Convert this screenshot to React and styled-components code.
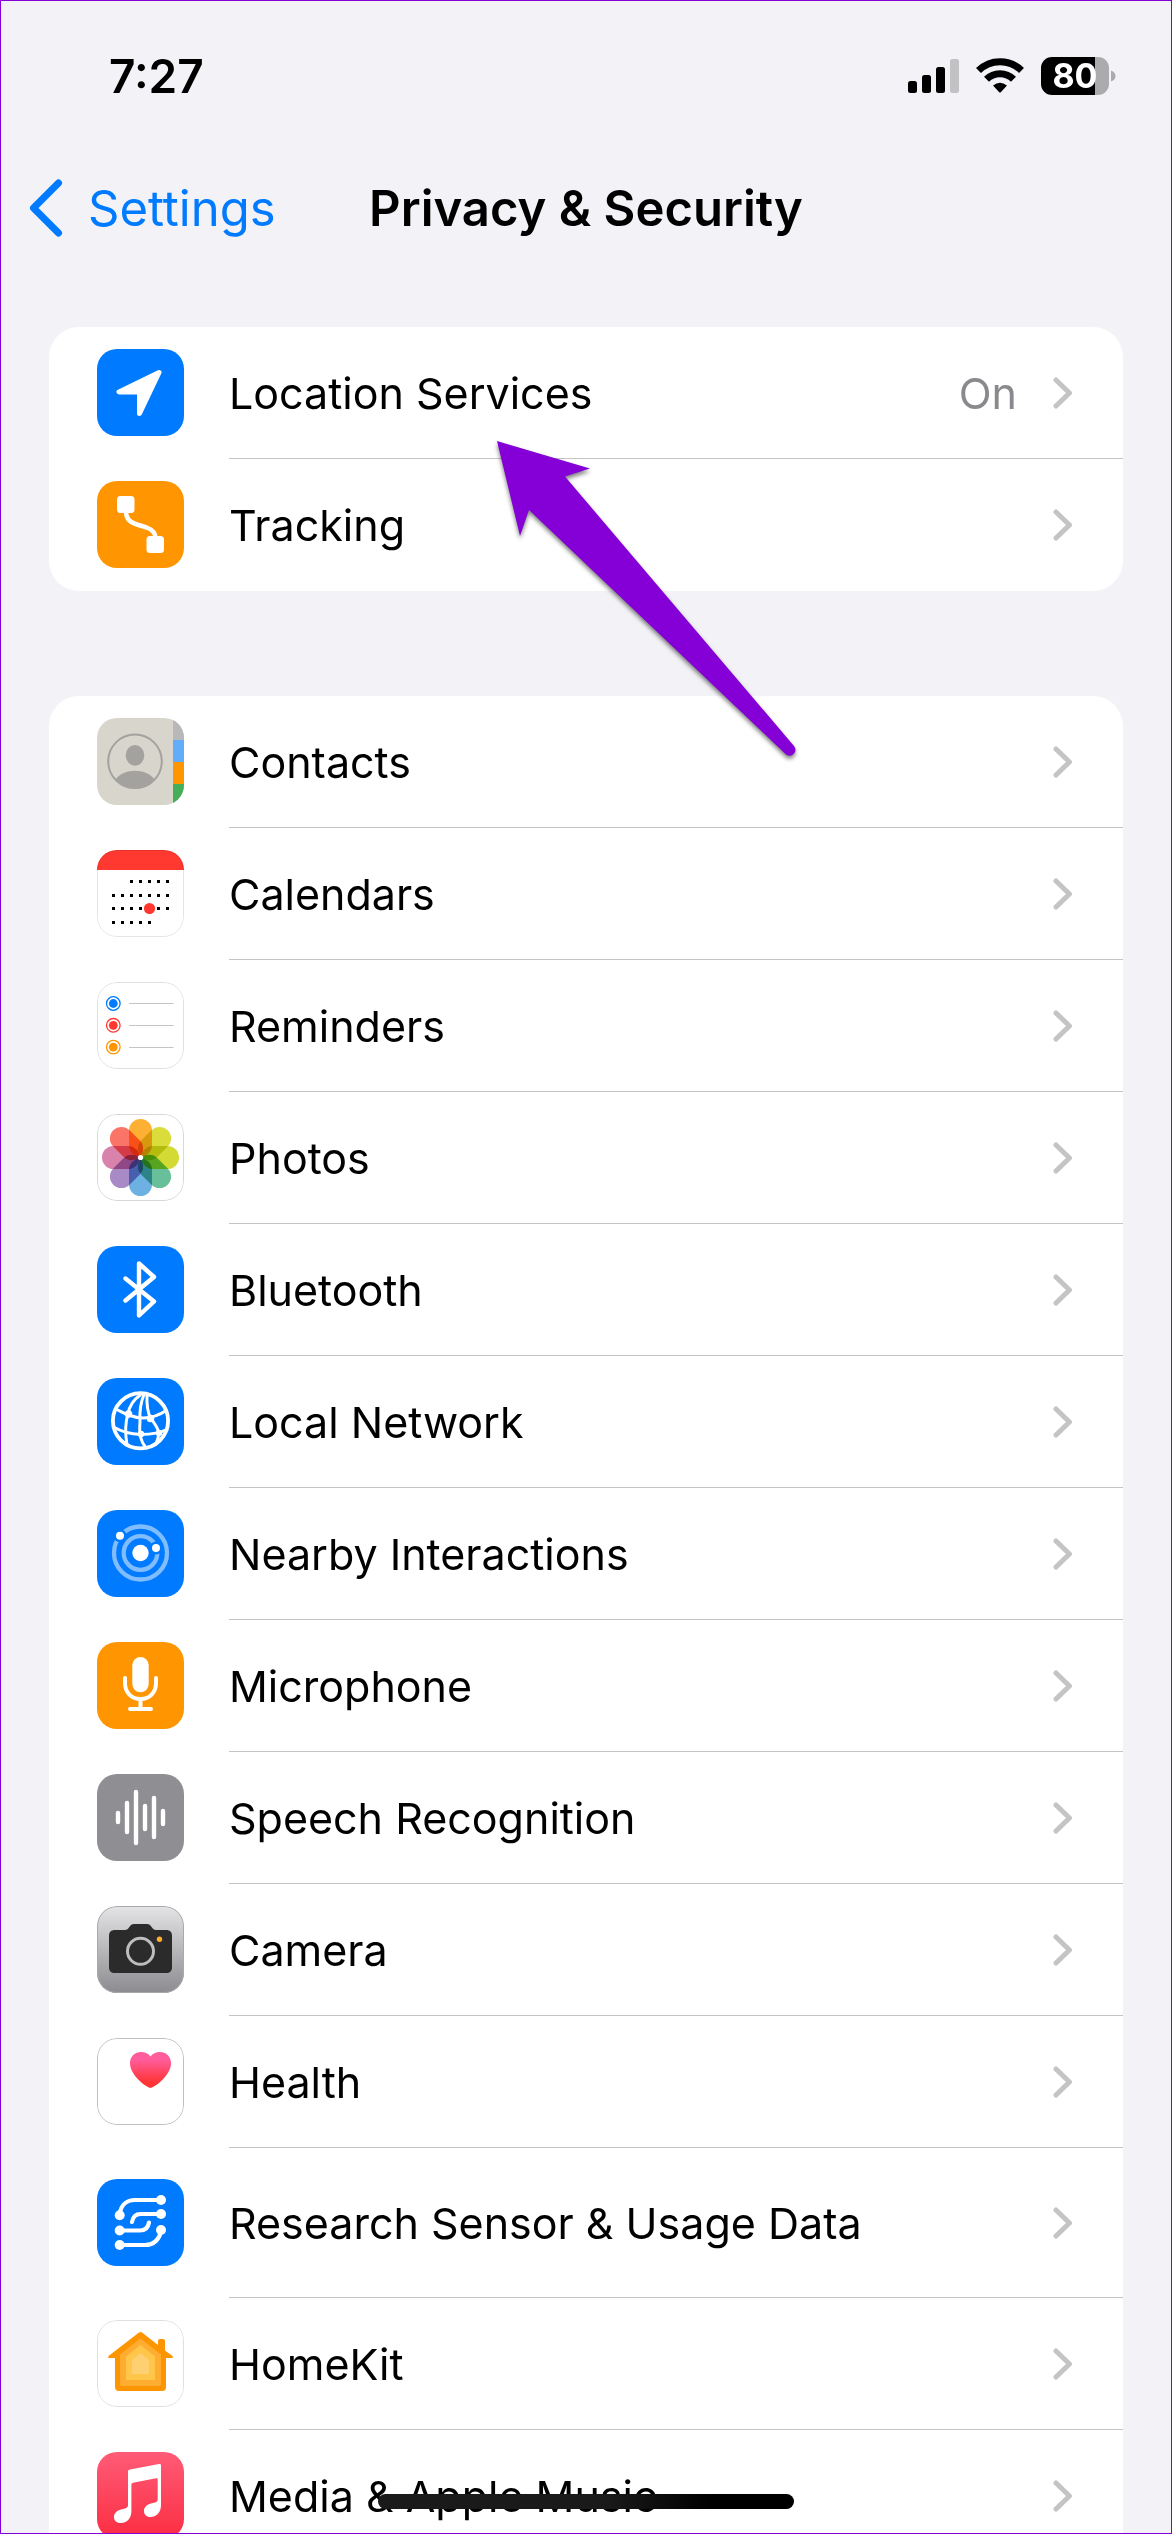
import React from "react";
import styled, { createGlobalStyle } from "styled-components";

const petals = [
  "#fdb034",
  "#dadc3c",
  "#d4da34",
  "#68c09a",
  "#6db0e2",
  "#a88ac6",
  "#d982ac",
  "#fa7468",
];

const calendarDots = [
  { y: 30, from: 2, to: 6 },
  { y: 44, from: 0, to: 6 },
  { y: 57, from: 0, to: 6 },
  { y: 71, from: 0, to: 4 },
];

const icons = {
  location: (
    <path
      d="M62 23.5L22 43H42.5V64.5Z"
      fill="#fff"
      stroke="#fff"
      strokeWidth="5"
      strokeLinejoin="round"
    />
  ),
  tracking: (
    <>
      <rect x="20" y="15" width="17.5" height="17" rx="3.5" fill="#fff" />
      <rect x="49.5" y="55" width="17.5" height="17" rx="3.5" fill="#fff" />
      <path
        d="M29 31C29 37 32.5 41 38.5 43L49.5 46.5C55 48.5 58.5 51 58.5 57"
        fill="none"
        stroke="#fff"
        strokeWidth="4.5"
      />
    </>
  ),
  contacts: (
    <>
      <rect x="76" width="11" height="22" fill="#b8b8b8" />
      <rect x="76" y="22" width="11" height="22" fill="#62adfa" />
      <rect x="76" y="44" width="11" height="22" fill="#ff9500" />
      <rect x="76" y="66" width="11" height="21" fill="#45ae59" />
      <circle cx="38" cy="43.3" r="26.8" fill="none" stroke="#a3a29f" strokeWidth="2" />
      <ellipse cx="38" cy="37.3" rx="9.3" ry="10.4" fill="#a3a29f" />
      <path d="M18.5 61.5C26 49.8 50 49.8 57.5 61.5A27 27 0 0 1 18.5 61.5Z" fill="#a3a29f" />
    </>
  ),
  calendars: (
    <>
      <rect width="87" height="20" fill="#ff3830" />
      {calendarDots.map((row) =>
        Array.from({ length: row.to - row.from + 1 }, (_, i) => (
          <rect
            key={`${row.y}-${i}`}
            x={15 + (row.from + i) * 9}
            y={row.y}
            width="3"
            height="3"
          />
        ))
      )}
      <circle cx="52.5" cy="58.5" r="5.6" fill="#ff3830" />
    </>
  ),
  reminders: (
    <>
      {["#007aff", "#ff3830", "#ff9500"].map((color, i) => (
        <g key={color}>
          <circle cx="16.3" cy={21.5 + i * 21.8} r="6.8" fill="none" stroke={color} strokeWidth="1.3" />
          <circle cx="16.3" cy={21.5 + i * 21.8} r="4.4" fill={color} />
          <rect x="32" y={21 + i * 22} width="44.5" height="1" fill="#c4c4c6" />
        </g>
      ))}
    </>
  ),
  photos: (
    <g style={{ isolation: "isolate" }}>
      {petals.map((color, i) => (
        <rect
          key={color}
          x="32"
          y="5"
          width="23"
          height="37.5"
          rx="11.5"
          fill={color}
          transform={`rotate(${i * 45} 43.5 43.5)`}
          style={{ mixBlendMode: "multiply" }}
        />
      ))}
      <circle cx="43.5" cy="43.5" r="2.6" fill="#fff" />
    </g>
  ),
  bluetooth: (
    <path
      d="M28.5 32.5L57 55.5L42 69.5V17.5L57 31L28.5 54.5"
      fill="none"
      stroke="#fff"
      strokeWidth="4.4"
      strokeLinecap="round"
      strokeLinejoin="round"
    />
  ),
  network: (
    <g fill="none" stroke="#fff" strokeWidth="3">
      <circle cx="43.5" cy="42.8" r="27.6" strokeWidth="3.8" />
      <path d="M44 16.5C36 22 32 29 31 36C28 45 28 55 30 67" />
      <path d="M47 16.5C43 26 42.5 36 43 44C42 56 43 62 49 70" />
      <path d="M50 16.5C49.5 29 50.5 34 53.5 40C61 50 65 55 58 67" />
      <path d="M19 31C26 34.5 28 36 33 37.5C44 41.5 56 41.5 70 32" />
      <path d="M16.5 49C24 53.5 34 56 44 56.5C55 56.5 64 54.5 71 51" />
      <g fill="#fff" stroke="none">
        <circle cx="31.5" cy="36" r="3.8" />
        <circle cx="53.5" cy="40.5" r="3.8" />
        <circle cx="44" cy="56" r="3.2" />
        <circle cx="62" cy="55" r="3.2" />
      </g>
    </g>
  ),
  nearby: (
    <>
      <g fill="none" stroke="#80bdff" strokeWidth="4.3">
        <circle cx="43.5" cy="43" r="16.8" />
        <circle cx="43.5" cy="43" r="26.5" />
      </g>
      <g fill="#007aff">
        <circle cx="23" cy="25.7" r="6.5" />
        <circle cx="59" cy="38" r="6.5" />
      </g>
      <g fill="#fff">
        <circle cx="43.5" cy="43" r="8.2" />
        <circle cx="23" cy="25.7" r="4" />
        <circle cx="59" cy="38" r="4" />
      </g>
    </>
  ),
  microphone: (
    <>
      <rect x="35.3" y="15" width="16.4" height="35.3" rx="8.2" fill="#fff" />
      <path
        d="M28 36V41C28 50.5 34.5 57 43.5 57S59 50.5 59 41V36M43.5 57V67M33 67H54"
        fill="none"
        stroke="#fff"
        strokeWidth="4"
        strokeLinecap="round"
      />
    </>
  ),
  speech: (
    <path
      d="M21 39V48M30 29V58M39 18V69M48 32V55M57 24V63M66 37V50"
      stroke="#fff"
      strokeWidth="4.4"
      strokeLinecap="round"
    />
  ),
  camera: (
    <>
      <path
        d="M18 24H28C30 24 31 23 32 21.5C33.5 19 35 18 37 18H50C52 18 53.5 19 55 21.5C56 23 57 24 59 24H69C73 24 75 26 75 30V61C75 65 73 67 69 67H18C14 67 12 65 12 61V30C12 26 14 24 18 24Z"
        fill="#2b2b2c"
      />
      <circle cx="43.5" cy="45.3" r="13" fill="none" stroke="#bdbdbf" strokeWidth="3" />
      <circle cx="62.5" cy="33.3" r="2.7" fill="#ffae2b" />
    </>
  ),
  health: (
    <>
      <linearGradient id="heart" x1="0" y1="0" x2="0" y2="1">
        <stop offset="0.2" stopColor="#ff5c9c" />
        <stop offset="0.85" stopColor="#ff3434" />
      </linearGradient>
      <path
        d="M53.5 50C51 50 33 38.5 33 25C33 18.5 38 14 44 14C48 14 51.5 15.5 53.5 18.5C55.5 15.5 59 14 63 14C69 14 74 18.5 74 25C74 38.5 56 50 53.5 50Z"
        fill="url(#heart)"
      />
    </>
  ),
  research: (
    <>
      <path
        d="M22.7 35C24 26 30 21 38 21H64M35 43C36 37 39 35 43.5 35H64M22.7 51.5H43C48 51.5 51 49 52 43.5M22.7 66H48C57 66 63 60 64 51"
        fill="none"
        stroke="#fff"
        strokeWidth="4.2"
        strokeLinecap="round"
      />
      <g fill="#fff">
        <circle cx="64" cy="21" r="5" />
        <circle cx="64" cy="35" r="5" />
        <circle cx="64" cy="51" r="5" />
        <circle cx="22.7" cy="36.3" r="5" />
        <circle cx="22.7" cy="51.5" r="5" />
        <circle cx="22.7" cy="66" r="5" />
      </g>
    </>
  ),
  homekit: (
    <>
      <path
        d="M42 12.5Q43.5 11.5 45 12.5L61 25V21Q61 19 63 19H66Q68 19 68 21V30.5L75.5 36Q76.5 38 74.5 38H69V67Q69 71 65 71H22Q18 71 18 67V38H12.5Q10.5 38 11.5 36Z"
        fill="#fd9500"
      />
      <path d="M43.5 18.5L64 34.5V64Q64 66 62 66H25Q23 66 23 64V34.5Z" fill="#ffad31" />
      <path d="M43.5 25L58 36.5V60H29V36.5Z" fill="#ffc64a" />
      <path d="M43.5 33L52 40V54H35V40Z" fill="#ffd072" />
    </>
  ),
  music: (
    <path
      d="M64 13.5V53C64 61 59 65 53.5 65C50 65 47 63 47 59C47 55 50 52.5 54 51.5L58 50.5C60 50 60.7 49 60.7 47V27.5C60.7 26.5 60 26 59 26.2L36 30.7C35 31 34.4 31.5 34.4 32.5V59C34.4 67 29.5 71 24 71C20 71 17 69 17 65C17 61 20 58.5 24 57.5L28 56.5C30 56 31 55 31 53V20C31 18.5 31.5 17.8 33 17.5L62 12C63.3 11.8 64 12.3 64 13.5Z"
      fill="#fff"
    />
  ),
};

const accessRows = [
  { label: "Location Services", icon: "location", bg: "#007aff", value: "On" },
  { label: "Tracking", icon: "tracking", bg: "#ff9500" },
];

const appRows = [
  { label: "Contacts", icon: "contacts", bg: "#d8d5cc" },
  { label: "Calendars", icon: "calendars", bg: "#fff", edge: "rgba(0, 0, 0, 0.1)" },
  { label: "Reminders", icon: "reminders", bg: "#fff", edge: "#e0e0e2" },
  { label: "Photos", icon: "photos", bg: "#fff", edge: "#d8d8da" },
  { label: "Bluetooth", icon: "bluetooth", bg: "#007aff" },
  { label: "Local Network", icon: "network", bg: "#007aff" },
  { label: "Nearby Interactions", icon: "nearby", bg: "#007aff" },
  { label: "Microphone", icon: "microphone", bg: "#ff9500" },
  { label: "Speech Recognition", icon: "speech", bg: "#8e8e93" },
  {
    label: "Camera",
    icon: "camera",
    bg: "linear-gradient(#e4e4e6, #8c8c90)",
    edge: "#a9a9ab",
  },
  { label: "Health", icon: "health", bg: "#fff", edge: "#c0c0c2" },
  { label: "Research Sensor & Usage Data", icon: "research", bg: "#007aff", tall: true },
  { label: "HomeKit", icon: "homekit", bg: "#fff", edge: "#e0e0e2" },
  { label: "Media & Apple Music", icon: "music", bg: "linear-gradient(#ff5b77, #fb2d42)" },
];

function SettingsGroup({ rows }) {
  return (
    <Group>
      {rows.map((row) => (
        <li key={row.label}>
          <Row href="#" $tall={row.tall}>
            <IconTile $bg={row.bg} $edge={row.edge}>
              <svg viewBox="0 0 87 87" aria-hidden="true">
                {icons[row.icon]}
              </svg>
            </IconTile>
            <RowBody>
              <Label>{row.label}</Label>
              {row.value && <Value>{row.value}</Value>}
              <Chevron viewBox="0 0 20 32" aria-hidden="true">
                <path d="M3 3L16.5 16L3 29" />
              </Chevron>
            </RowBody>
          </Row>
        </li>
      ))}
    </Group>
  );
}

export default function App() {
  return (
    <Screen>
      <GlobalStyle />
      <StatusBar>
        <Time>7:27</Time>
        <StatusIcons>
          <svg width="51" height="38" viewBox="0 0 51 38" aria-hidden="true">
            <rect y="24" width="9" height="12" rx="2.5" />
            <rect x="14" y="18" width="9" height="18" rx="2.5" />
            <rect x="28" y="10" width="9" height="26" rx="2.5" />
            <rect x="42" y="2" width="9" height="34" rx="2.5" fill="#c2c2c4" />
          </svg>
          <svg width="48" height="38" viewBox="0 0 48 38" aria-hidden="true">
            <g fill="none" stroke="#000" strokeWidth="7">
              <path d="M2.5 13.5A30.5 30.5 0 0 1 45.5 13.5" />
              <path d="M10.5 22.3A19 19 0 0 1 37.5 22.3" />
            </g>
            <path d="M17 28.5Q24 23 31 28.5L25 35Q24 36.2 23 35Z" />
          </svg>
          <Battery>
            <BatteryLevel>80</BatteryLevel>
            <svg width="5" height="12" viewBox="0 0 5 12" aria-hidden="true">
              <path d="M0 0.5Q4.5 2 4.5 6T0 11.5Z" fill="#ababad" />
            </svg>
          </Battery>
        </StatusIcons>
      </StatusBar>

      <NavBar>
        <BackLink href="#">
          <svg width="34" height="58" viewBox="0 0 34 58" aria-hidden="true">
            <path d="M29.5 4L4.5 29L29.5 54" />
          </svg>
          Settings
        </BackLink>
        <Title>Privacy &amp; Security</Title>
      </NavBar>

      <Content>
        <SettingsGroup rows={accessRows} />
        <SettingsGroup rows={appRows} />
      </Content>

      <Pointer viewBox="0 0 300 318" aria-hidden="true">
        <path d="M0 0L93 27.5L68 35.5L297 305Q300 309 297 312.5Q293.5 316.5 289 313.5L32 69L23 95Z" />
      </Pointer>
      <HomeIndicator />
    </Screen>
  );
}

const GlobalStyle = createGlobalStyle`
  * {
    box-sizing: border-box;
  }
  body {
    margin: 0;
    background-color: #f2f2f7;
    font-family: Inter, "Liberation Sans", sans-serif;
    color: #000;
  }
  ul {
    list-style: none;
    margin: 0;
    padding: 0;
  }
  a {
    color: inherit;
    text-decoration: none;
  }
  svg {
    display: block;
    flex-shrink: 0;
  }
`;

const Screen = styled.main`
  position: relative;
  display: flex;
  flex-direction: column;
  height: 100vh;
  overflow: hidden;
  background-color: #f2f2f7;
  border: 1px solid #8400d6;
`;

const StatusBar = styled.div`
  display: flex;
  align-items: center;
  justify-content: space-between;
  flex-shrink: 0;
  height: 150px;
  padding: 0 55px 0 108px;
`;

const Time = styled.time`
  font-size: 46px;
  font-weight: 600;
`;

const StatusIcons = styled.div`
  display: flex;
  align-items: center;
  gap: 17px;
`;

const Battery = styled.div`
  display: flex;
  align-items: center;
  gap: 2px;
`;

const BatteryLevel = styled.span`
  width: 68px;
  height: 38px;
  border-radius: 11px;
  background: linear-gradient(to right, #000 80%, #ababad 80%);
  color: #fff;
  font-size: 34px;
  font-weight: 700;
  line-height: 38px;
  text-align: center;
`;

const NavBar = styled.header`
  display: grid;
  grid-template-columns: 1fr auto 1fr;
  align-items: center;
  flex-shrink: 0;
  height: 114px;
  padding: 0 28px;
`;

const BackLink = styled.a`
  display: flex;
  align-items: center;
  gap: 25px;
  color: #007aff;
  font-size: 49px;
  path {
    fill: none;
    stroke: #007aff;
    stroke-width: 7;
    stroke-linecap: round;
    stroke-linejoin: round;
  }
`;

const Title = styled.h1`
  margin: 0;
  font-size: 49px;
  font-weight: 600;
`;

const Content = styled.div`
  display: flex;
  flex-direction: column;
  flex: 1;
  gap: 105px;
  padding: 62px 48px 0;
  overflow-y: auto;
  scrollbar-width: none;
`;

const Group = styled.ul`
  flex-shrink: 0;
  border-radius: 30px;
  background-color: #fff;
  overflow: hidden;
`;

const RowBody = styled.div`
  display: flex;
  align-items: center;
  flex: 1;
  padding-right: 50px;
  border-bottom: 1px solid #c4c4c6;
`;

const Row = styled.a`
  display: flex;
  gap: 45px;
  height: ${(props) => (props.$tall ? "150px" : "132px")};
  padding-left: 48px;
  li:last-child > & ${RowBody} {
    border-bottom-color: transparent;
  }
`;

const IconTile = styled.span`
  position: relative;
  align-self: center;
  flex-shrink: 0;
  width: 87px;
  height: 87px;
  /* same height as the separator, so the tile centers with the label */
  margin-bottom: 1px;
  border-radius: 20px;
  background: ${(props) => props.$bg};
  overflow: hidden;
  &::after {
    content: "";
    position: absolute;
    inset: 0;
    border: 1px solid ${(props) => props.$edge || "transparent"};
    border-radius: 20px;
  }
`;

const Label = styled.span`
  flex: 1;
  font-size: 43px;
`;

const Value = styled.span`
  margin-right: 36px;
  color: #8a8a8e;
  font-size: 43px;
`;

const Chevron = styled.svg`
  width: 20px;
  height: 32px;
  fill: none;
  stroke: #c4c4c6;
  stroke-width: 5;
  stroke-linecap: round;
  stroke-linejoin: round;
`;

/* arrow lying over the list, its tip under the first row's label */
const Pointer = styled.svg`
  position: absolute;
  top: 440px;
  left: 496px;
  width: 300px;
  height: 318px;
  fill: #8400d6;
  overflow: visible;
  pointer-events: none;
  filter: drop-shadow(0 3px 2px rgba(0, 0, 0, 0.5));
`;

const HomeIndicator = styled.div`
  position: absolute;
  bottom: 24px;
  left: 50%;
  width: 416px;
  height: 15px;
  margin-left: -208px;
  border-radius: 8px;
  background: linear-gradient(to right, #1a1a1a 55%, #000 80%);
`;
